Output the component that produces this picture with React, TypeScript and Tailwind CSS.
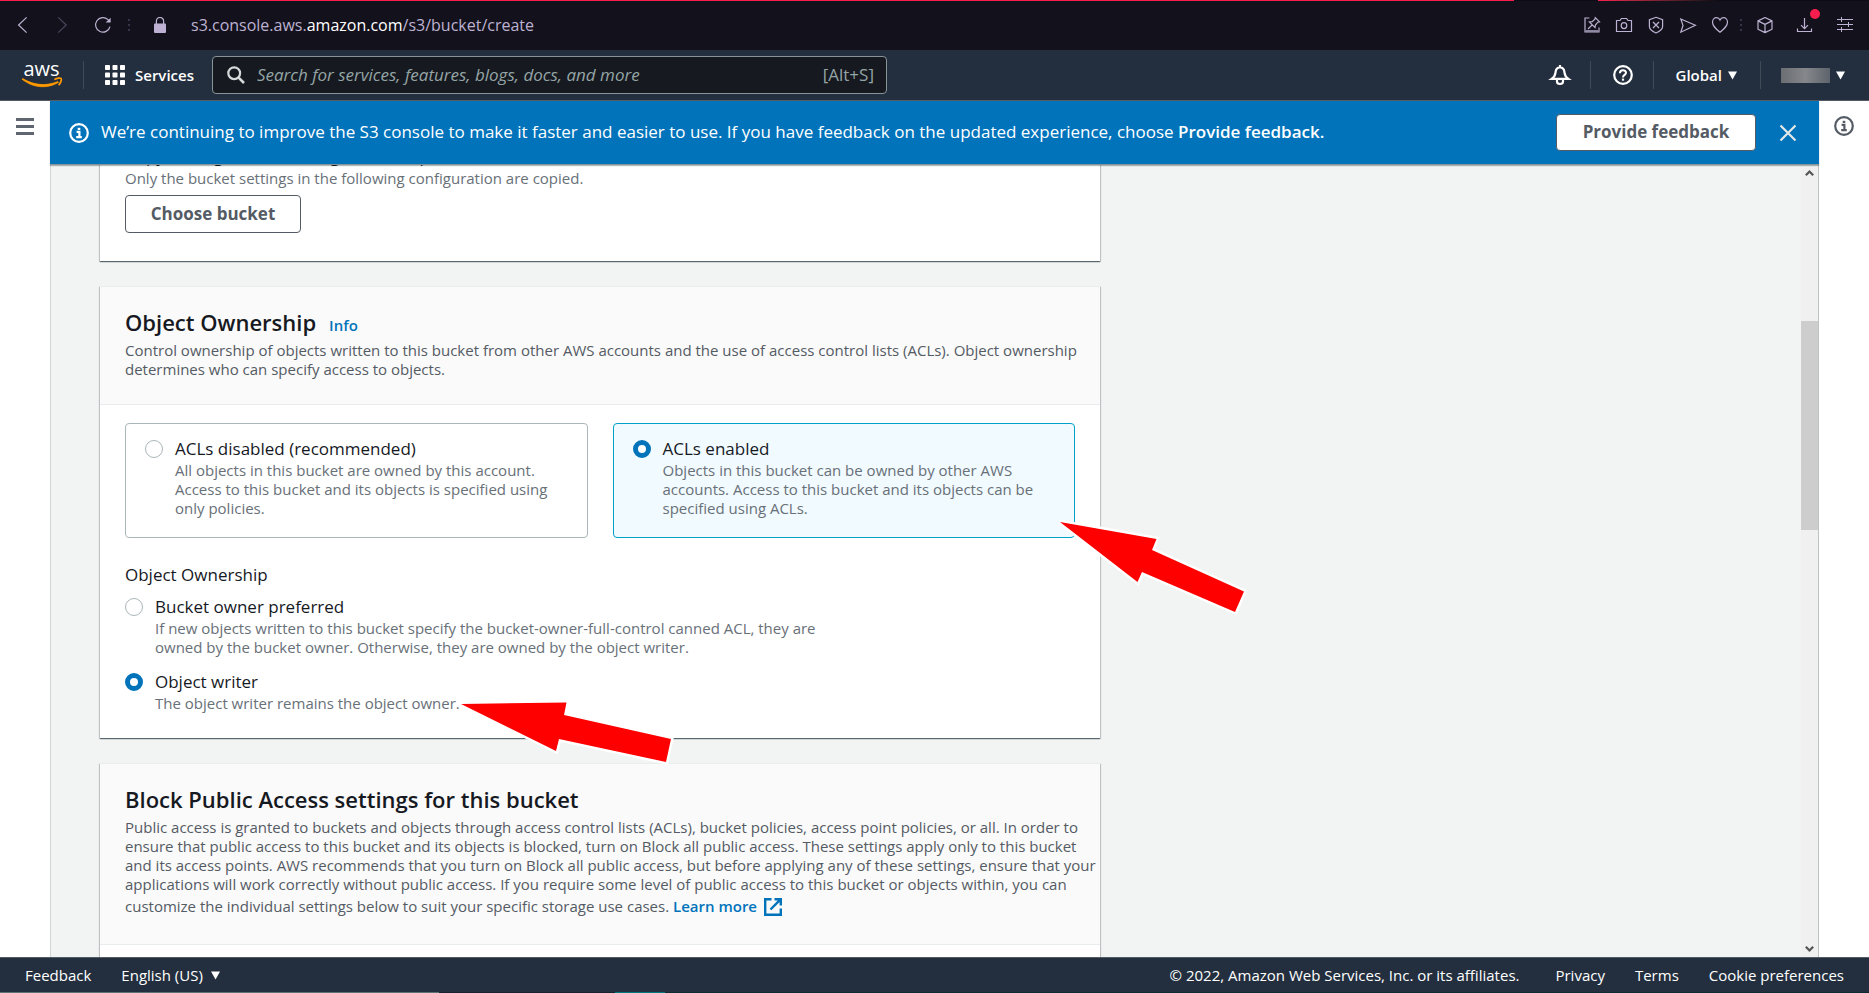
import React from "react";

type SvgProps = { className?: string; children?: React.ReactNode };

const Line = ({ className = "", children }: SvgProps) => (
  <svg viewBox="0 0 16 16" className={`block shrink-0 overflow-visible ${className}`} fill="none" stroke="currentColor" aria-hidden="true">
    {children}
  </svg>
);

const InfoIcon = ({ className = "" }: SvgProps) => (
  <svg viewBox="0 0 20 20" className={`block size-5 shrink-0 ${className}`} fill="none" stroke="currentColor" strokeWidth="2.2" aria-hidden="true">
    <circle cx="10" cy="10" r="8.8" />
    <path d="M7.6 8.9H10.4V14M7.2 14.1H12.8" strokeWidth="2.2" />
    <path d="M8.7 4.8H11.3V7H8.7Z" fill="currentColor" stroke="none" />
  </svg>
);

const Caret = () => (
  <svg viewBox="0 0 9 9" className="block size-[9px] shrink-0 fill-white" aria-hidden="true">
    <path d="M0 0.5H9L4.5 8.5Z" />
  </svg>
);

const DarkDots = () => (
  <span className="flex flex-col gap-[3px]" aria-hidden="true">
    <span className="size-[2px] bg-[#38354a]" />
    <span className="size-[2px] bg-[#38354a]" />
    <span className="size-[2px] bg-[#38354a]" />
  </span>
);

const Divider = () => <span className="block h-7 w-px shrink-0 bg-[#3f4a57]" aria-hidden="true" />;

function BrowserBar() {
  return (
    <div className="flex h-[50px] shrink-0 flex-col bg-[#13111b] text-[#bdb2d3]">
      <div className="flex h-px shrink-0">
        <div className="w-[81%] bg-[#fa1e4e]" />
        <div className="w-[4.5%] bg-[#0d0c14]" />
        <div className="flex-1 bg-gradient-to-r from-[#fa1e4e] to-[#0d0c14] to-45%" />
      </div>
      <div className="flex min-h-0 flex-1 items-center pb-[2px] pl-[15px] pr-4">
        <button aria-label="Back">
          <Line className="size-4"><path d="M11.6 0.4 3.6 8l8 7.6" strokeWidth="1.2" /></Line>
        </button>
        <button aria-label="Forward" className="ml-6 text-[#4b465c]">
          <Line className="size-4"><path d="M3.2 0.4 11.2 8l-8 7.6" strokeWidth="1.2" /></Line>
        </button>
        <button aria-label="Reload" className="ml-6">
          <Line className="size-4">
            <path d="M15 9.6A7.3 7.3 0 1 1 13 2.6L15 4.4" strokeWidth="1.2" />
            <path d="M15.6 0.8V5.6H10.6Z" fill="currentColor" stroke="none" />
          </Line>
        </button>
        <span className="ml-[17px]"><DarkDots /></span>
        <svg viewBox="0 0 12 16" className="ml-6 h-4 w-3 shrink-0" aria-hidden="true">
          <path d="M2.4 7V4a3.6 3.6 0 0 1 7.2 0v3" fill="none" stroke="currentColor" strokeWidth="1.2" />
          <rect y="6.6" width="12" height="9.4" rx="1" fill="currentColor" />
        </svg>
        <span className="ml-[25px] text-base leading-6">
          s3.console.aws.<span className="text-white">amazon.com</span>/s3/bucket/create
        </span>
        <div className="ml-auto flex items-center gap-4">
          <button aria-label="Pinboards">
            <Line className="size-4">
              <path d="M5.4 1H1V15H15V10.4" strokeWidth="1.2" />
              <path d="M2 13.9H14" strokeWidth="1.2" />
              <path d="M11.3 0.6 15.5 4.8 13.8 5.2 11.4 8 11 10.6 5.4 5 8.2 4.7 10.9 2.2ZM8.2 7.8 4 12" strokeWidth="1.2" />
            </Line>
          </button>
          <button aria-label="Snapshot">
            <Line className="size-4">
              <path d="M0.5 3.5H4L5.4 1.5H10.6L12 3.5H15.5V14.5H0.5Z" strokeLinejoin="round" strokeWidth="1.2" />
              <ellipse cx="8" cy="8.6" rx="2.8" ry="3" strokeWidth="1.2" />
            </Line>
          </button>
          <button aria-label="Ad blocker">
            <Line className="size-4">
              <path d="M8 0.3 14.6 2.6V9.6C14.6 12.8 11.4 14.6 8 16 4.6 14.6 1.4 12.8 1.4 9.6V2.6Z" strokeWidth="1.2" />
              <path d="M5 5 11 11M11 5 5 11" strokeWidth="1.3" />
            </Line>
          </button>
          <button aria-label="My Flow">
            <Line className="size-4"><path d="M0.8 2 15.4 8.3 0.8 15.2 3 8.4Z" strokeWidth="1.2" /></Line>
          </button>
          <button aria-label="Save to bookmarks">
            <Line className="size-4">
              <path
                d="M8 15.2C3.6 11.6 0.5 9 0.5 5.2 0.5 2.5 2.4 0.7 4.6 0.7 6.2 0.7 7.4 1.6 8 3 8.6 1.6 9.8 0.7 11.4 0.7 13.6 0.7 15.5 2.5 15.5 5.2 15.5 9 12.4 11.6 8 15.2Z"
                strokeWidth="1.2"
              />
            </Line>
          </button>
        </div>
        <span className="ml-3"><DarkDots /></span>
        <div className="ml-[15px] flex items-center gap-6">
          <button aria-label="Extensions">
            <Line className="size-4">
              <path d="M8 0.5 15 3.9V12.2L8 15.6 1 12.2V3.9ZM1 3.9 8 7.4 15 3.9M8 7.4V15.6" strokeLinejoin="round" strokeWidth="1.2" />
            </Line>
          </button>
          <button aria-label="Downloads" className="relative">
            <Line className="size-4"><path d="M7.5 1V11.6M4 8.2 7.5 11.7 11 8.2M0.5 11.4V14.5H14.5V11.4" strokeWidth="1.2" /></Line>
            <span className="absolute -right-[7px] -top-2 size-[10px] rounded-full bg-[#fa1e4e]" />
          </button>
          <button aria-label="Easy setup">
            <Line className="size-4">
              <path d="M0 2.5H16M0 7.5H16M0 12.5H16M4.5 0V5M11.5 5V10M4.5 10V15" />
            </Line>
          </button>
        </div>
      </div>
    </div>
  );
}

function TopNav() {
  return (
    <header className="flex h-[51px] shrink-0 items-center border-b border-[#545b64] bg-[#232f3e] pr-6 text-[15px] font-semibold text-white">
      <a href="#home" aria-label="AWS home" className="ml-[22px]">
        <svg viewBox="0 0 40 26" className="block h-[26px] w-10 overflow-visible">
          <text x="1.5" y="13.5" fontSize="20" fontWeight="500" fill="#fff" fontFamily="'Open Sans', sans-serif">aws</text>
          <path d="M0 17.2C12 26.6 26 26.6 36.4 20.4L35.8 19.6C24 24.4 12 23.4 0.6 16.6Z" fill="#f90" stroke="#f90" strokeWidth="0.8" />
          <path d="M32.4 17.6C35 16 38.6 15.8 39.2 16.6 39.8 17.6 38.6 21.4 36.6 23.2" fill="none" stroke="#f90" strokeWidth="1.7" />
        </svg>
      </a>
      <span className="ml-[21px]"><Divider /></span>
      <button className="ml-[21px] flex items-center gap-[10px]">
        <svg viewBox="0 0 20 20" className="block size-5 fill-white" aria-hidden="true">
          {[0, 7.5, 15].map((y) => [0, 7.5, 15].map((x) => <rect key={`${x}-${y}`} x={x} y={y} width="5" height="5" rx="0.8" />))}
        </svg>
        Services
      </button>
      <label className="ml-[18px] flex h-[38px] w-[675px] items-center rounded-sm border border-[#879596] bg-[#16191f] pl-[14px] pr-3 text-[17px] font-normal text-[#95a5a6]">
        <svg viewBox="0 0 18 18" className="block size-[18px] shrink-0" fill="none" stroke="#d5dbdb" strokeWidth="2.2" aria-hidden="true">
          <circle cx="7.2" cy="7.2" r="5.9" />
          <path d="M11.6 11.6 17 17" strokeWidth="2.6" />
        </svg>
        <input
          type="search"
          aria-label="Search"
          placeholder="Search for services, features, blogs, docs, and more"
          className="ml-3 min-w-0 flex-1 bg-transparent italic outline-none placeholder:text-[#95a5a6]"
        />
        <span>[Alt+S]</span>
      </label>
      <div className="ml-auto flex items-center">
        <button aria-label="Notifications">
          <svg viewBox="0 0 20 20" className="block size-5 overflow-visible" fill="none" stroke="#fff" strokeWidth="2.2" aria-hidden="true">
            <path d="M10 2.2C6.8 2.6 5.7 5 5.5 7.6 5.2 10.4 4 12.2 1.6 13.9H18.4C16 12.2 14.8 10.4 14.5 7.6 14.3 5 13.2 2.6 10 2.2ZM10 0V2" />
            <path d="M7 15V16.6C7 19.8 13 19.8 13 16.6V15" />
          </svg>
        </button>
        <span className="ml-5"><Divider /></span>
        <button aria-label="Help" className="ml-[22px]">
          <svg viewBox="0 0 20 20" className="block size-5" fill="none" stroke="#fff" strokeWidth="2.2" aria-hidden="true">
            <circle cx="10" cy="10" r="8.8" />
            <path d="M6.9 8.2C6.9 4.4 13 4.4 13 7.8 13 10 10 9.8 10 12.4" strokeWidth="2" />
            <path d="M8.9 13.6H11.1V15.7H8.9Z" fill="#fff" stroke="none" />
          </svg>
        </button>
        <span className="ml-5"><Divider /></span>
        <button className="ml-[22px] flex items-center gap-[6px]">
          Global
          <Caret />
        </button>
        <span className="ml-[23px]"><Divider /></span>
        <button aria-label="Account" className="ml-5 flex items-center gap-[6px]">
          <span className="h-[15px] w-[49px] bg-gradient-to-r from-[#6b6e73] via-[#85878b] to-[#5e646c]" />
          <Caret />
        </button>
      </div>
    </header>
  );
}

function Banner() {
  return (
    <div className="relative z-20 flex h-16 shrink-0 items-center border-b border-[#879596] bg-[#0073bb] pl-[19px] pr-[23px] text-[17px] text-white shadow-[0_1px_1px_rgba(0,28,36,0.3)]">
      <InfoIcon />
      <p className="ml-3 pb-[2px]">
        We’re continuing to improve the S3 console to make it faster and easier to use. If you have feedback on the updated experience, choose{" "}
        <strong className="font-semibold">Provide feedback.</strong>
      </p>
      <button className="ml-auto h-[37px] w-[200px] shrink-0 rounded-sm border border-[#545b64] bg-white pb-[2px] font-bold text-[#545b64]">
        Provide feedback
      </button>
      <button aria-label="Dismiss" className="ml-6 text-[#e3e8e8]">
        <Line className="size-4"><path d="M0.5 0.5 15.5 15.5M15.5 0.5 0.5 15.5" strokeWidth="2.2" /></Line>
      </button>
    </div>
  );
}

const CARD =
  "border-t border-[#eaeded] bg-white shadow-[0_1px_1px_0_rgba(0,28,36,0.5),1px_1px_1px_0_rgba(0,28,36,0.15),-1px_1px_1px_0_rgba(0,28,36,0.15)]";

function CardHeader({ title, info, children }: { title: string; info?: boolean; children: React.ReactNode }) {
  return (
    <div className="border-b border-[#eaeded] bg-[#fafafa] pb-[25px] pl-[25px] pt-5">
      <div className="flex items-baseline gap-[13px]">
        <h2 className="text-[22px] font-semibold leading-[30px] text-[#16191f]">{title}</h2>
        {info && <a href="#info" className="text-[15px] font-semibold text-[#0073bb]">Info</a>}
      </div>
      <p className="mt-1 text-[15px] leading-[19px] text-[#545b64]">{children}</p>
    </div>
  );
}

type OptionProps = { name: string; title: string; checked: boolean; onSelect: () => void; className?: string; children: React.ReactNode };

function RadioOption({ name, title, checked, onSelect, className = "", children }: OptionProps) {
  return (
    <label className={`flex gap-3 ${className}`}>
      <span className="flex h-[25px] shrink-0 items-center">
        <input
          type="radio"
          name={name}
          checked={checked}
          onChange={onSelect}
          className="size-[18px] appearance-none rounded-full border border-[#aab7b8] bg-white checked:border-5 checked:border-[#0073bb]"
        />
      </span>
      <span className="flex flex-col">
        <span className="text-[17px] leading-[25px] text-[#16191f]">{title}</span>
        <span className="text-[15px] leading-[19px] text-[#687078]">{children}</span>
      </span>
    </label>
  );
}

const tile = (on: boolean) =>
  `rounded-sm border pb-[19px] pl-[19px] pr-5 pt-3 ${on ? "border-[#00a1c9] bg-[#f1faff]" : "border-[#aab7b8] bg-white"}`;

function OwnershipCard() {
  const [acl, setAcl] = React.useState("enabled");
  const [owner, setOwner] = React.useState("writer");
  return (
    <section className={`relative z-10 mt-[25px] ${CARD}`}>
      <CardHeader title="Object Ownership" info>
        Control ownership of objects written to this bucket from other AWS accounts and the use of access control lists (ACLs). Object ownership
        determines who can specify access to objects.
      </CardHeader>
      <div className="px-[25px] pb-[25px] pt-[18px]">
        <div className="grid grid-cols-2 gap-[25px]">
          <RadioOption name="acl" title="ACLs disabled (recommended)" checked={acl === "disabled"} onSelect={() => setAcl("disabled")} className={tile(acl === "disabled")}>
            All objects in this bucket are owned by this account. Access to this bucket and its objects is specified using only policies.
          </RadioOption>
          <RadioOption name="acl" title="ACLs enabled" checked={acl === "enabled"} onSelect={() => setAcl("enabled")} className={tile(acl === "enabled")}>
            Objects in this bucket can be owned by other AWS accounts. Access to this bucket and its objects can be specified using ACLs.
          </RadioOption>
        </div>
        <fieldset className="mt-6 max-w-[710px]">
          <legend className="text-[17px] leading-[25px] text-[#16191f]">Object Ownership</legend>
          <RadioOption name="owner" title="Bucket owner preferred" checked={owner === "bucket"} onSelect={() => setOwner("bucket")} className="mt-[7px]">
            If new objects written to this bucket specify the bucket-owner-full-control canned ACL, they are owned by the bucket owner. Otherwise, they are
            owned by the object writer.
          </RadioOption>
          <RadioOption name="owner" title="Object writer" checked={owner === "writer"} onSelect={() => setOwner("writer")} className="mt-3">
            The object writer remains the object owner.
          </RadioOption>
        </fieldset>
      </div>
      <svg
        viewBox="0 0 1160 500"
        className="pointer-events-none absolute left-0 top-0 h-[500px] w-[1160px]"
        fill="#fe0000"
        stroke="#fff"
        strokeWidth="5"
        paintOrder="stroke"
        aria-hidden="true"
      >
        <path d="M960 235 1056.5 252 1052 263 1144 304.5 1135 325 1042 285 1037.5 295Z" />
        <path d="M361 417 466.5 415.5 464 428 571 452 566 475 459 452 456 464Z" />
      </svg>
    </section>
  );
}

function Footer() {
  return (
    <footer className="flex h-9 shrink-0 flex-col border-t border-[#545b64] bg-[#232f3e] text-[15px] text-white">
      <div className="flex min-h-0 flex-1 items-center px-[25px] pt-px">
        <a href="#feedback" className="font-medium">Feedback</a>
        <button className="ml-[30px] flex items-center gap-2 font-medium">
          English (US)
          <Caret />
        </button>
        <span className="ml-auto">© 2022, Amazon Web Services, Inc. or its affiliates.</span>
        <a href="#privacy" className="ml-9">Privacy</a>
        <a href="#terms" className="ml-[30px]">Terms</a>
        <a href="#cookies" className="ml-[30px]">Cookie preferences</a>
      </div>
      <div className="flex h-px shrink-0 bg-[#0d2a33]">
        <div className="w-[23.5%] bg-[#5b7478]" />
        <div className="w-[9.4%] bg-[#14232f]" />
        <div className="w-[2.7%] bg-[#007a80]" />
      </div>
    </footer>
  );
}

export default function App() {
  return (
    <div className="flex h-screen flex-col overflow-hidden bg-white font-['Open_Sans','Noto_Sans',sans-serif]">
      <BrowserBar />
      <TopNav />
      <div className="flex min-h-0 flex-1">
        <nav className="w-[50px] shrink-0 pt-[17px]">
          <button aria-label="Open navigation" className="mx-auto flex w-[18px] flex-col gap-1">
            <span className="h-[3px] w-full bg-[#60666f]" />
            <span className="h-[3px] w-full bg-[#60666f]" />
            <span className="h-[3px] w-full bg-[#60666f]" />
          </button>
        </nav>
        <main className="flex min-w-0 flex-1 flex-col bg-[#f2f3f3]">
          <Banner />
          <div className="flex min-h-0 flex-1">
            <div className="min-w-0 flex-1 overflow-hidden border-l border-[#d0d6d6] pl-[49px]">
              <div className="-mt-[43px] max-w-[1000px]">
                <section className={`px-[25px] pb-7 pt-[19px] ${CARD}`}>
                  <h3 className="text-[17px] leading-[27px] text-[#16191f]">
                    Copy settings from existing bucket - <i>optional</i>
                  </h3>
                  <p className="text-[15px] leading-[19px] text-[#687078]">Only the bucket settings in the following configuration are copied.</p>
                  <button className="mt-[7px] h-[38px] w-44 rounded-sm border border-[#545b64] bg-white text-[17px] font-bold text-[#545b64]">
                    Choose bucket
                  </button>
                </section>
                <OwnershipCard />
                <section className={`mt-[25px] pb-10 ${CARD}`}>
                  <CardHeader title="Block Public Access settings for this bucket">
                    Public access is granted to buckets and objects through access control lists (ACLs), bucket policies, access point policies, or all. In
                    order to ensure that public access to this bucket and its objects is blocked, turn on Block all public access. These settings apply only
                    to this bucket and its access points. AWS recommends that you turn on Block all public access, but before applying any of these settings,
                    ensure that your applications will work correctly without public access. If you require some level of public access to this bucket or
                    objects within, you can customize the individual settings below to suit your specific storage use cases.{" "}
                    <a href="#learn" className="inline-flex h-[25px] items-center gap-[7px] font-semibold text-[#0073bb]">
                      Learn more
                      <svg viewBox="0 0 18 18" className="block size-[18px]" fill="none" stroke="currentColor" strokeWidth="2.4" aria-hidden="true">
                        <path d="M7.5 1.2H1.2V16.8H16.8V10.5M10.5 1.2H16.8V7.5M16.8 1.2 6.5 11.5" />
                      </svg>
                    </a>
                  </CardHeader>
                </section>
              </div>
            </div>
            <div className="flex w-[18px] shrink-0 flex-col items-center border-r border-[#bcc4c4] bg-[#f0f0f0] text-[#555]" aria-hidden="true">
              <Line className="mt-1 size-[9px]"><path d="M1.5 11 8 4.5 14.5 11" strokeWidth="4" /></Line>
              <div className="flex-[143]" />
              <div className="w-full flex-[208] bg-[#cdcdcd]" />
              <div className="flex-[413]" />
              <Line className="mb-1 size-[9px]"><path d="M1.5 5 8 11.5 14.5 5" strokeWidth="4" /></Line>
            </div>
          </div>
        </main>
        <aside className="w-[50px] shrink-0 pt-[15px]">
          <button aria-label="Open help panel" className="mx-auto block text-[#545b64]">
            <InfoIcon />
          </button>
        </aside>
      </div>
      <Footer />
    </div>
  );
}
